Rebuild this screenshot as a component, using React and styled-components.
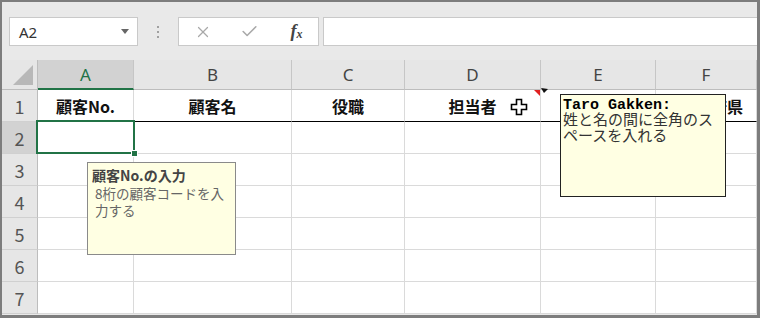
import styled, { createGlobalStyle } from 'styled-components';
import { X, Check } from 'lucide-react';

const GlobalStyle = createGlobalStyle`
  body {
    margin: 0;
    font-family: "Noto Sans CJK JP", "Noto Sans", sans-serif;
  }
`;

const Frame = styled.div`
  position: relative;
  width: 760px;
  height: 318px;
  box-sizing: border-box;
  border-style: solid;
  border-color: #7d7d7d;
  border-width: 2px 3px 3px 2px;
  background: #e9e9e9;
  overflow: hidden;
`;

const FormulaBar = styled.div`
  display: flex;
  align-items: flex-start;
  height: 58px;
  box-sizing: border-box;
  padding: 15px 0 0 7px;
`;

const Box = styled.div`
  height: 29px;
  box-sizing: border-box;
  background: #fff;
  border: 1px solid #c9c9c9;
  display: flex;
  align-items: center;
`;

const NameBox = styled(Box)`
  width: 129px;
  padding: 0 8px 0 9px;
  justify-content: space-between;
  font-family: "Noto Sans", sans-serif;
  font-size: 15px;
  color: #333;
`;

const Caret = styled.span`
  width: 0;
  height: 0;
  border-left: 4px solid transparent;
  border-right: 4px solid transparent;
  border-top: 5px solid #666;
`;

const Separator = styled.div`
  width: 40px;
  height: 29px;
  display: flex;
  flex-direction: column;
  align-items: center;
  justify-content: center;
  gap: 3px;
`;

const Dot = styled.span`
  width: 2px;
  height: 2px;
  background: #a0a0a0;
`;

const FxButtons = styled(Box)`
  width: 141px;
  display: grid;
  grid-template-columns: repeat(3, 47px);
  justify-items: center;
  color: #a9a9a9;
`;

const FxLabel = styled.span`
  font-family: "Liberation Serif", serif;
  font-style: italic;
  font-weight: 700;
  font-size: 18px;
  color: #444;
  sub {
    font-size: 12px;
    vertical-align: -1px;
  }
`;

const FormulaInput = styled(Box)`
  flex: 1;
  margin-left: 4px;
  border-right: none;
`;

const Sheet = styled.div`
  display: grid;
  grid-template-columns: 36px 96px 158px 113px 136px 115px 1fr;
  grid-template-rows: 30px repeat(7, 32px);
  background: #fff;
`;

const Cell = styled.div`
  position: relative;
  box-sizing: border-box;
  border-right: 1px solid #dadada;
  border-bottom: 1px solid ${(p) => (p.$head ? '#000' : '#dadada')};
  display: flex;
  align-items: center;
  justify-content: ${(p) => (p.$right ? 'flex-end' : 'center')};
  padding-right: ${(p) => (p.$right ? '13px' : '0')};
  font-size: 16px;
  font-weight: 700;
  color: #111;
  white-space: nowrap;
`;

const Corner = styled.div`
  position: relative;
  background: #e6e6e6;
  border-right: 1px solid #bdbdbd;
  border-bottom: 1px solid #bdbdbd;
  &::after {
    content: '';
    position: absolute;
    right: 4px;
    bottom: 4px;
    width: 20px;
    height: 20px;
    background: #b8b8b8;
    clip-path: polygon(100% 0, 100% 100%, 0 100%);
  }
`;

const ColHead = styled.div`
  box-sizing: border-box;
  display: flex;
  align-items: center;
  justify-content: center;
  font-family: "Noto Sans", sans-serif;
  font-size: 17px;
  color: ${(p) => (p.$active ? '#217346' : '#444')};
  background: ${(p) => (p.$active ? '#d2d2d2' : '#e6e6e6')};
  border-right: 1px solid #c6c6c6;
  border-bottom: ${(p) => (p.$active ? '2px solid #217346' : '1px solid #bdbdbd')};
`;

const RowHead = styled.div`
  box-sizing: border-box;
  display: flex;
  align-items: center;
  justify-content: center;
  font-family: "Noto Sans CJK JP", sans-serif;
  font-size: 18px;
  color: #555;
  background: ${(p) => (p.$active ? '#d2d2d2' : '#e6e6e6')};
  border-right: 1px solid #bdbdbd;
  border-bottom: 1px solid #d0d0d0;
`;

const Selected = styled(Cell)`
  &::after {
    content: '';
    position: absolute;
    inset: -2px -2px -1px -2px;
    border: 2px solid #217346;
  }
  &::before {
    content: '';
    position: absolute;
    right: -5px;
    bottom: -4px;
    width: 5px;
    height: 5px;
    background: #217346;
    border: 1px solid #fff;
    z-index: 1;
  }
`;

const RedMark = styled.span`
  position: absolute;
  top: 0;
  right: 0;
  width: 6px;
  height: 6px;
  background: #e02020;
  clip-path: polygon(0 0, 100% 0, 100% 100%);
`;

const Cursor = styled.svg`
  position: absolute;
  left: 105px;
  top: 8px;
`;

const Arrow = styled.svg`
  position: absolute;
  left: 539px;
  top: 86px;
`;

const InputMessage = styled.div`
  position: absolute;
  left: 85px;
  top: 160px;
  width: 149px;
  height: 93px;
  box-sizing: border-box;
  padding: 3px 4px;
  background: #ffffe3;
  border: 1px solid #8a8a8a;
  font-size: 13.5px;
  color: #666;
`;

const MessageTitle = styled.div`
  font-size: 14px;
  line-height: 19px;
  font-weight: 700;
  color: #444;
`;

const MessageLine = styled.div`
  padding-left: 3px;
  height: 17px;
  line-height: 17px;
`;

const Note = styled.div`
  position: absolute;
  left: 558px;
  top: 92px;
  width: 166px;
  height: 103px;
  box-sizing: border-box;
  padding: 3px 2px;
  background: #ffffe3;
  border: 1px solid #222;
  font-family: "Liberation Mono", "Noto Sans CJK JP", monospace;
  font-size: 15px;
  color: #333;
`;

const NoteLine = styled.div`
  height: 16px;
  line-height: 16px;
  font-weight: ${(p) => (p.$bold ? 700 : 400)};
  color: ${(p) => (p.$bold ? '#000' : '#333')};
`;

const columns = ['A', 'B', 'C', 'D', 'E', 'F'];
const headers = ['顧客No.', '顧客名', '役職', '担当者', '', '都道府県'];

export default function App() {
  return (
    <>
      <GlobalStyle />
      <Frame>
        <FormulaBar>
          <NameBox>
            A2
            <Caret />
          </NameBox>
          <Separator>
            <Dot />
            <Dot />
            <Dot />
          </Separator>
          <FxButtons>
            <X size={18} strokeWidth={1.6} />
            <Check size={19} strokeWidth={2} />
            <FxLabel>
              f<sub>x</sub>
            </FxLabel>
          </FxButtons>
          <FormulaInput />
        </FormulaBar>

        <Sheet>
          <Corner />
          {columns.map((c) => (
            <ColHead key={c} $active={c === 'A'}>
              {c}
            </ColHead>
          ))}

          <RowHead>1</RowHead>
          {headers.map((h, i) => (
            <Cell key={i} $head $right={i === 5}>
              {h}
              {i === 3 && (
                <>
                  <RedMark />
                  <Cursor width="18" height="18" viewBox="0 0 18 18">
                    <path
                      d="M6.5 1.5h5v5h5v5h-5v5h-5v-5h-5v-5h5z"
                      fill="#fff"
                      stroke="#000"
                      strokeWidth="1.6"
                    />
                  </Cursor>
                </>
              )}
            </Cell>
          ))}

          {[2, 3, 4, 5, 6, 7].map((r) => (
            <Row key={r} n={r} />
          ))}
        </Sheet>

        <Arrow width="8" height="6" viewBox="0 0 8 6">
          <path d="M0 0 L7 1 L3 5 Z" fill="#111" />
        </Arrow>

        <InputMessage>
          <MessageTitle>顧客No.の入力</MessageTitle>
          <MessageLine>8桁の顧客コードを入</MessageLine>
          <MessageLine>力する</MessageLine>
        </InputMessage>

        <Note>
          <NoteLine $bold>Taro Gakken:</NoteLine>
          <NoteLine>姓と名の間に全角のス</NoteLine>
          <NoteLine>ペースを入れる</NoteLine>
        </Note>
      </Frame>
    </>
  );
}

function Row({ n }) {
  return (
    <>
      <RowHead $active={n === 2}>{n}</RowHead>
      {columns.map((c) =>
        n === 2 && c === 'A' ? <Selected key={c} /> : <Cell key={c} />
      )}
    </>
  );
}
